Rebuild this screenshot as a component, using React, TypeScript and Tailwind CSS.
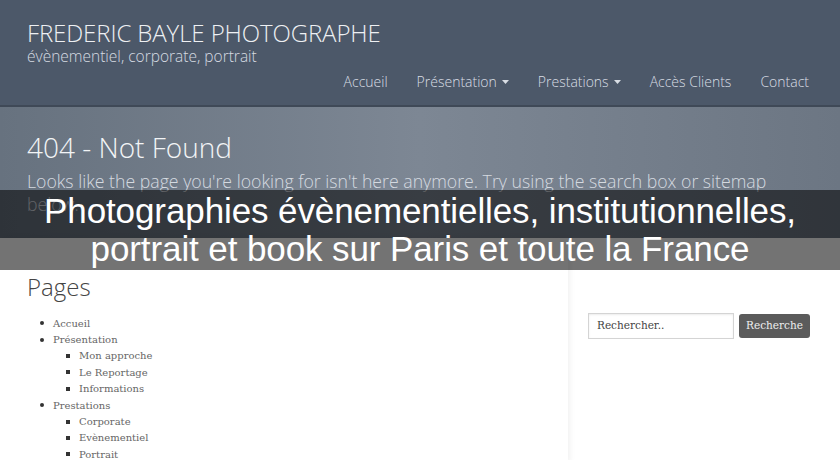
import { FC } from "react";

const Caret: FC = () => (
  <svg width="7" height="4" viewBox="0 0 7 4" className="ml-[5px] inline-block">
    <path d="M0 0h7L3.5 4z" fill="currentColor" />
  </svg>
);

const Item: FC<{ label: string; sub?: boolean }> = ({ label, sub }) => (
  <li className={`flex items-center h-[16.4px] ${sub ? "pl-[39px]" : "pl-[13px]"}`}>
    <span
      className={`shrink-0 bg-[#333] ${sub ? "w-[4px] h-[4px] mr-[9px]" : "w-[4px] h-[4px] rounded-full mr-[9px]"}`}
    />
    {label}
  </li>
);

const App: FC = () => {
  const nav = [
    { label: "Accueil" },
    { label: "Présentation", caret: true },
    { label: "Prestations", caret: true },
    { label: "Accès Clients" },
    { label: "Contact" },
  ];

  return (
    <div className="relative w-[840px] h-[460px] overflow-hidden bg-white">
      {/* HEADER: titre, sous-titre, menu */}
      <div className="h-[107px] bg-[#4c5869] border-b-2 border-[#3f4957] px-[27px] pt-[19px] font-['Open_Sans',sans-serif]">
        <div className="text-[24px] leading-[28px] font-light text-[#eef0f3] tracking-[-0.1px]">FREDERIC BAYLE PHOTOGRAPHE</div>
        <div className="text-[15.5px] leading-[18px] font-light text-[#d6dbe2]">évènementiel, corporate, portrait</div>
        <div className="flex justify-end gap-[29px] mt-[6px] mr-[4px] text-[14px] text-[#d9dee5] font-light">
          {nav.map((n) => (
            <span key={n.label} className="flex items-center">
              {n.label}
              {n.caret && <Caret />}
            </span>
          ))}
        </div>
      </div>

      {/* BANNER: 404 */}
      <div className="h-[131px] bg-gradient-to-r from-[#67727f] via-[#7d8794] to-[#6c7683] px-[27px] pt-[23px] font-['Open_Sans',sans-serif]">
        <div className="text-[28px] leading-[34px] font-light text-[#f2f4f6]">404 - Not Found</div>
        <div className="mt-[6px] text-[17.7px] leading-[23px] font-light text-[#d5dae0] w-[770px]">
          Looks like the page you're looking for isn't here anymore. Try using the search box or sitemap below.
        </div>
      </div>

      {/* CONTENT */}
      <div className="flex">
        <div className="w-[568px] pl-[27px] pt-[35px] shadow-[2px_0_6px_rgba(0,0,0,0.06)]">
          <div className="font-['Open_Sans',sans-serif] font-light text-[24px] leading-[28px] text-[#444]">Pages</div>
          <ul className="mt-[14px] text-[10px] text-[#666] font-['DejaVu_Serif',serif]">
            <Item label="Accueil" />
            <Item label="Présentation" />
            <Item label="Mon approche" sub />
            <Item label="Le Reportage" sub />
            <Item label="Informations" sub />
            <Item label="Prestations" />
            <Item label="Corporate" sub />
            <Item label="Evènementiel" sub />
            <Item label="Portrait" sub />
          </ul>
        </div>
        <div className="flex-1 pl-[20px] pt-[75px]">
          <div className="flex items-center gap-[5px]">
            <div className="w-[146px] h-[26px] border border-[#d4d4d4] bg-white px-[8px] flex items-center text-[10.5px] text-[#444] font-['DejaVu_Serif',serif] shadow-[inset_0_1px_2px_rgba(0,0,0,0.08)]">
              Rechercher..
            </div>
            <div className="w-[71px] h-[24px] rounded-[3px] bg-[#5b5b5b] flex items-center justify-center text-[10.5px] text-[#eee] font-['DejaVu_Serif',serif]">
              Recherche
            </div>
          </div>
        </div>
      </div>

      {/* OVERLAY caption */}
      <div className="absolute left-0 top-[190px] w-[840px] h-[80px] bg-black/55 flex flex-col items-center justify-center text-white font-['Liberation_Sans',Arial,sans-serif] text-[35px] leading-[38px] tracking-[-0.1px]">
        <div>Photographies évènementielles, institutionnelles,</div>
        <div>portrait et book sur Paris et toute la France</div>
      </div>
    </div>
  );
};

export default App;
